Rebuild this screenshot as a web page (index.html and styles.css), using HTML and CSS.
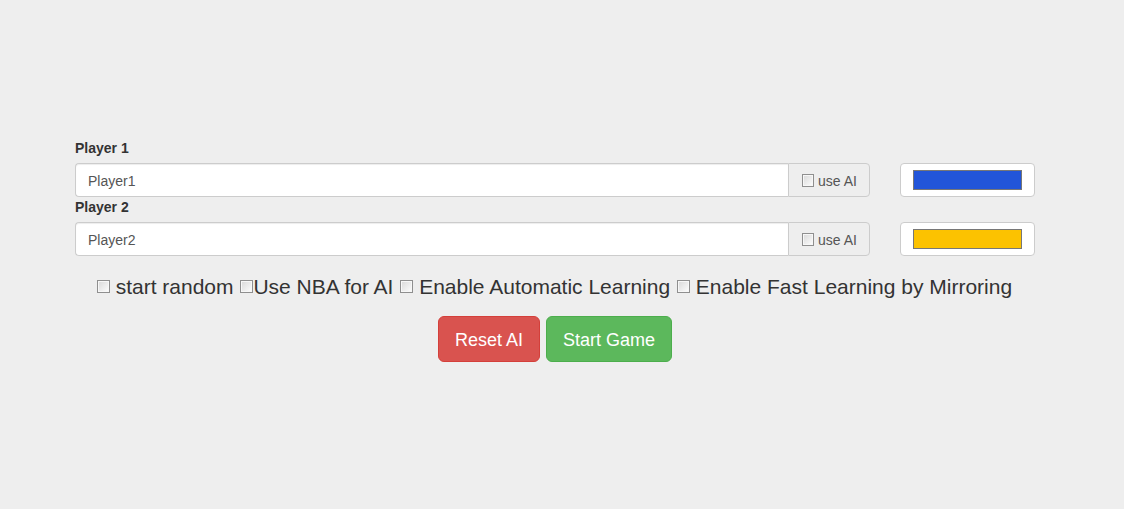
FILE: index.html
```html
<!DOCTYPE html>
<html>
<head>
<meta charset="utf-8">
<link rel="stylesheet" href="styles.css">
</head>
<body>
<div class="page">
  <div class="field">
    <label class="title">Player 1</label>
    <div class="row">
      <div class="input-group">
        <div class="text-input">Player1</div>
        <div class="addon"><input type="checkbox" class="cb"> use AI</div>
      </div>
      <div class="color-box"><span class="swatch blue"></span></div>
    </div>
  </div>
  <div class="field">
    <label class="title">Player 2</label>
    <div class="row">
      <div class="input-group">
        <div class="text-input">Player2</div>
        <div class="addon"><input type="checkbox" class="cb"> use AI</div>
      </div>
      <div class="color-box"><span class="swatch yellow"></span></div>
    </div>
  </div>
  <div class="options">
    <input type="checkbox" class="cb big"> start random <input type="checkbox" class="cb big">Use NBA for AI <input type="checkbox" class="cb big"> Enable Automatic Learning <input type="checkbox" class="cb big"> Enable Fast Learning by Mirroring
  </div>
  <div class="buttons">
    <button class="btn danger">Reset AI</button>
    <button class="btn success">Start Game</button>
  </div>
</div>
</body>
</html>
```

FILE: styles.css
```css
html, body {
  margin: 0;
  padding: 0;
  background: #eeeeee;
  color: #333333;
  font-family: "Liberation Sans", Arial, sans-serif;
  font-size: 14px;
  line-height: 20px;
}
.page {
  width: 960px;
  margin: 0 0 0 75px;
  padding-top: 138px;
}
.title {
  display: block;
  font-weight: bold;
  margin-bottom: 5px;
  height: 20px;
}
.row {
  display: flex;
  gap: 30px;
}
.input-group {
  display: flex;
  width: 795px;
  height: 34px;
  box-sizing: border-box;
}
.text-input {
  flex: 1;
  background: #fff;
  border: 1px solid #cccccc;
  border-right: none;
  border-radius: 4px 0 0 4px;
  padding: 7px 12px 5px;
  color: #555555;
  box-shadow: inset 0 1px 1px rgba(0,0,0,0.075);
  box-sizing: border-box;
  height: 34px;
}
.addon {
  width: 82px;
  box-sizing: border-box;
  height: 34px;
  background: #eeeeee;
  border: 1px solid #cccccc;
  border-radius: 0 4px 4px 0;
  padding: 7px 12px 5px 12px;
  color: #555555;
  display: flex;
  align-items: center;
  white-space: pre;
}
.cb {
  appearance: none;
  -webkit-appearance: none;
  width: 13px;
  height: 13px;
  margin: 0 0 0 1px;
  box-sizing: border-box;
  border: 1px solid #8f8f8f;
  background: linear-gradient(135deg, #d8d8d8 0%, #f2f2f2 70%, #ffffff 100%);
  box-shadow: inset 0 0 0 1px #f7f7f7;
  vertical-align: middle;
}
.addon .cb {
  margin: -1px 0 0 1px;
}
.color-box {
  width: 135px;
  height: 34px;
  box-sizing: border-box;
  background: #fff;
  border: 1px solid #cccccc;
  border-radius: 4px;
  padding: 6px 12px;
  display: flex;
  align-items: center;
}
.swatch {
  display: block;
  width: 109px;
  height: 20px;
  box-sizing: border-box;
  border: 1px solid #777777;
}
.blue { background: #2255d9; }
.yellow { background: #fcc200; }
.options {
  margin-top: 16px;
  margin-left: -2px;
  text-align: center;
  font-size: 21px;
  line-height: 30px;
  height: 30px;
}
.options .cb {
  vertical-align: 1px;
}
.buttons {
  margin-top: 14px;
  display: flex;
  justify-content: center;
  gap: 6px;
}
.btn {
  font-family: "Liberation Sans", Arial, sans-serif;
  font-size: 18px;
  line-height: 24px;
  padding: 11px 16px 9px;
  border-radius: 6px;
  color: #fff;
  border: 1px solid transparent;
  height: 46px;
  box-sizing: border-box;
}
.danger {
  background: #d9534f;
  border-color: #d43f3a;
}
.success {
  background: #5cb85c;
  border-color: #4cae4c;
}
```
